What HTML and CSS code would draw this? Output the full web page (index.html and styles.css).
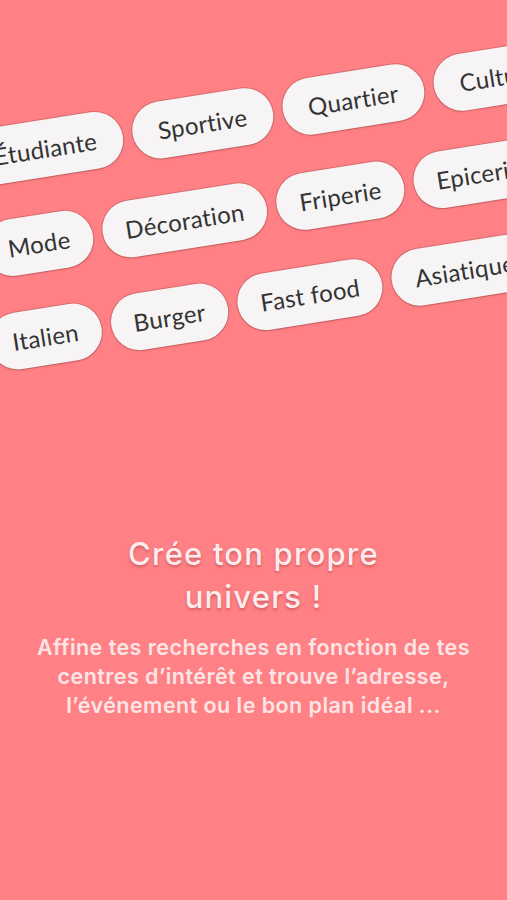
FILE: index.html
```html
<!DOCTYPE html>
<html lang="fr">
<head>
<meta charset="utf-8">
<title>Crée ton propre univers</title>
<link rel="stylesheet" href="styles.css">
</head>
<body>
<div class="screen">
  <div class="tags">
    <div class="tags-plane">
      <div class="row row-1">
        <span class="pill">Étudiante</span>
        <span class="pill">Sportive</span>
        <span class="pill">Quartier</span>
        <span class="pill">Culture</span>
      </div>
      <div class="row row-2">
        <span class="pill">Mode</span>
        <span class="pill">Décoration</span>
        <span class="pill">Friperie</span>
        <span class="pill">Epicerie</span>
      </div>
      <div class="row row-3">
        <span class="pill">Italien</span>
        <span class="pill">Burger</span>
        <span class="pill">Fast food</span>
        <span class="pill">Asiatique</span>
      </div>
    </div>
  </div>
  <div class="intro">
    <h1 class="title">Crée ton propre<br>univers !</h1>
    <p class="text">Affine tes recherches en fonction de tes centres d’intérêt et trouve l’adresse, l’événement ou le bon plan idéal ...</p>
  </div>
</div>
</body>
</html>
```

FILE: styles.css
```css
html, body {
  margin: 0;
  padding: 0;
}

body {
  background: #ff8185;
}

.screen {
  width: 507px;
  height: 900px;
  overflow: hidden;
  background: #ff8185;
  display: flex;
  flex-direction: column;
}

.tags {
  height: 510px;
  flex-shrink: 0;
}

.tags-plane {
  width: 1000px;
  transform-origin: 0 0;
  transform: rotate(-9deg);
  padding-top: 125px;
  display: flex;
  flex-direction: column;
  gap: 36px;
}

.row {
  display: flex;
  gap: 10px;
  flex-wrap: nowrap;
}

.row-1 { margin-left: -56px; }
.row-1 .pill { padding: 0 26px; }
.row-2 { margin-left: -54px; }
.row-3 { margin-left: -64px; }

.pill {
  flex-shrink: 0;
  height: 57px;
  padding: 0 23px;
  border-radius: 28.5px;
  background: #f6f4f4;
  box-shadow: 0 0 0 1px rgba(150, 70, 72, 0.35), 0 1px 2px rgba(120, 40, 40, 0.25);
  display: flex;
  align-items: center;
  font-family: Lato, "Noto Sans", sans-serif;
  font-size: 24px;
  letter-spacing: 0.3px;
  color: #333333;
  white-space: nowrap;
}

.intro {
  text-align: center;
  font-family: Inter, "Noto Sans", sans-serif;
  color: #fdeced;
  padding: 22px 30px 0;
}

.title {
  margin: 0;
  font-size: 31px;
  font-weight: 500;
  line-height: 43px;
  letter-spacing: 1.2px;
  text-shadow: 0 2px 3px rgba(120, 30, 35, 0.35);
}

.text {
  margin: 15px 0 0;
  font-size: 21.5px;
  font-weight: 600;
  line-height: 29px;
  letter-spacing: 0.45px;
  color: #fce5e6;
}
```
